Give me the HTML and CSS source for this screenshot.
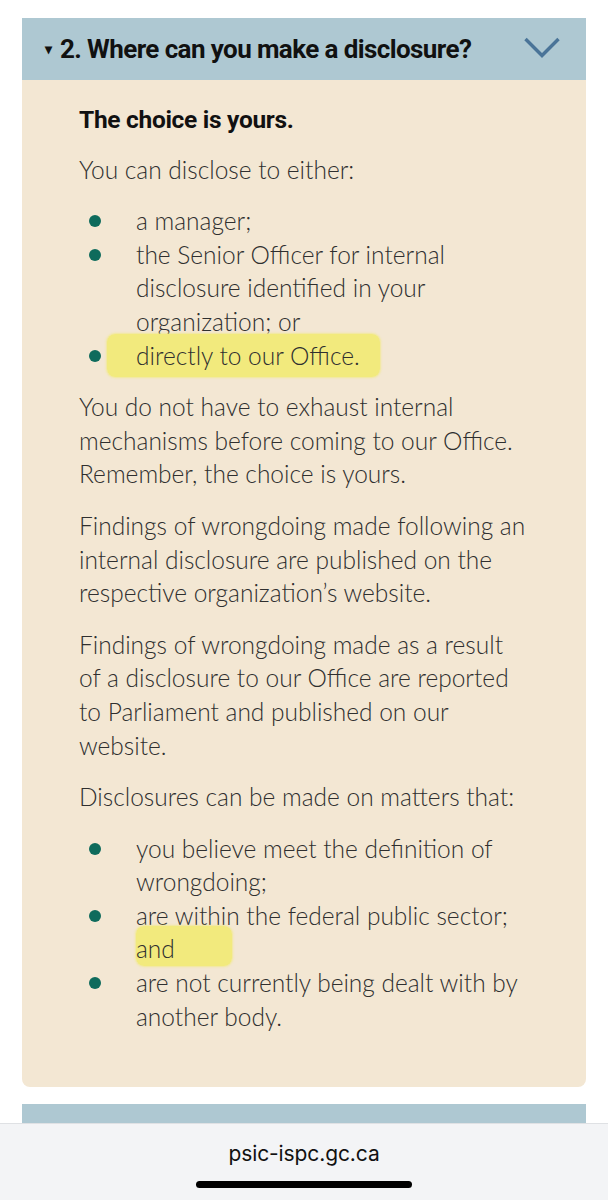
FILE: index.html
```html
<!DOCTYPE html>
<html lang="en">
<head>
<meta charset="utf-8">
<title>Where can you make a disclosure?</title>
<link rel="stylesheet" href="styles.css">
</head>
<body>
<main class="page">
  <section class="panel">
    <header class="panel-head">
      <h2 class="panel-title"><span class="caret">&#9662;</span>2. Where can you make a disclosure?</h2>
      <svg class="chevron" width="36" height="22" viewBox="0 0 36 22" aria-hidden="true">
        <path d="M1.5 2 L18 18.5 L34.5 2" fill="none" stroke="#4a7498" stroke-width="3.4"/>
      </svg>
    </header>
    <div class="panel-body">
      <p class="lead">The choice is yours.</p>
      <p>You can disclose to either:</p>
      <ul class="dots">
        <li>a manager;</li>
        <li>the Senior Officer for internal disclosure identified in your organization; or</li>
        <li><span class="mark mark-one">directly to our Office.</span></li>
      </ul>
      <p>You do not have to exhaust internal mechanisms before coming to our Office. Remember, the choice is yours.</p>
      <p>Findings of wrongdoing made following an internal disclosure are published on the respective organization’s website.</p>
      <p>Findings of wrongdoing made as a result of a disclosure to our Office are reported to Parliament and published on our website.</p>
      <p>Disclosures can be made on matters that:</p>
      <ul class="dots">
        <li>you believe meet the definition of wrongdoing;</li>
        <li>are within the federal public sector; <span class="mark mark-two">and</span></li>
        <li>are not currently being dealt with by another body.</li>
      </ul>
    </div>
  </section>
  <section class="panel next">
    <header class="panel-head short"></header>
  </section>
</main>
<footer class="browser-bar">
  <div class="url">psic-ispc.gc.ca</div>
  <div class="home-indicator"></div>
</footer>
</body>
</html>
```

FILE: styles.css
```css
* { box-sizing: border-box; }
html, body { margin: 0; padding: 0; background: #ffffff; }
body { font-family: "Lato Light", Lato, "Open Sans", sans-serif; color: #333; }

.page { padding: 18px 22px 0; }

.panel { margin: 0; }
.panel-head {
  background: #aec8d2;
  height: 62px;
  display: flex;
  align-items: center;
  justify-content: space-between;
  padding: 0 26px 0 23px;
}
.panel-title {
  margin: 0;
  font-family: Roboto, "Liberation Sans", sans-serif;
  font-weight: 700;
  font-size: 26px;
  letter-spacing: -0.6px;
  color: #111;
  display: flex;
  align-items: center;
}
.caret { font-size: 14px; margin-right: 8px; letter-spacing: 0; }
.chevron { display: block; margin-top: -2px; }

.panel-body {
  background: #f3e7d3;
  border-radius: 0 0 8px 8px;
  padding: 23px 60px 36px 57px;
  font-weight: 300;
  font-size: 24.5px;
  line-height: 33.6px;
  color: #2f2f2f;
}
.panel-body p { margin: 0 0 18px; }
.panel-body .lead {
  font-weight: 700;
  color: #111;
  font-family: Roboto, Lato, sans-serif;
  font-size: 24.5px;
  letter-spacing: -0.3px;
  margin-bottom: 16px;
}

.dots { list-style: none; margin: 0 0 18px; padding: 0 0 0 57px; }
.dots li { position: relative; }
.dots li::before {
  content: "";
  position: absolute;
  left: -47px;
  top: 11px;
  width: 12px;
  height: 12px;
  border-radius: 50%;
  background: #0e6b5c;
}

.mark {
  background: #f2ea7d;
  border-radius: 8px;
  padding: 7px 0;
  box-shadow: 0 0 2px 1px rgba(242, 234, 125, 0.7);
  -webkit-box-decoration-break: clone;
  box-decoration-break: clone;
}
.mark-one { padding-left: 29px; margin-left: -29px; padding-right: 20px; }
.mark-two { padding-right: 57px; padding-top: 8px; padding-bottom: 3px; }

.next { margin-top: 17px; }
.panel-head.short { height: 40px; }

.browser-bar {
  position: fixed;
  left: 0; right: 0; bottom: 0;
  height: 77px;
  background: #f3f4f6;
  border-top: 1px solid #dfe1e4;
  display: flex;
  flex-direction: column;
  align-items: center;
}
.url {
  margin-top: 17px;
  font-family: Inter, Roboto, sans-serif;
  font-size: 21px;
  color: #111;
  letter-spacing: -0.1px;
}
.home-indicator {
  margin-top: 15px;
  width: 216px;
  height: 7px;
  border-radius: 4px;
  background: #000;
}
```
